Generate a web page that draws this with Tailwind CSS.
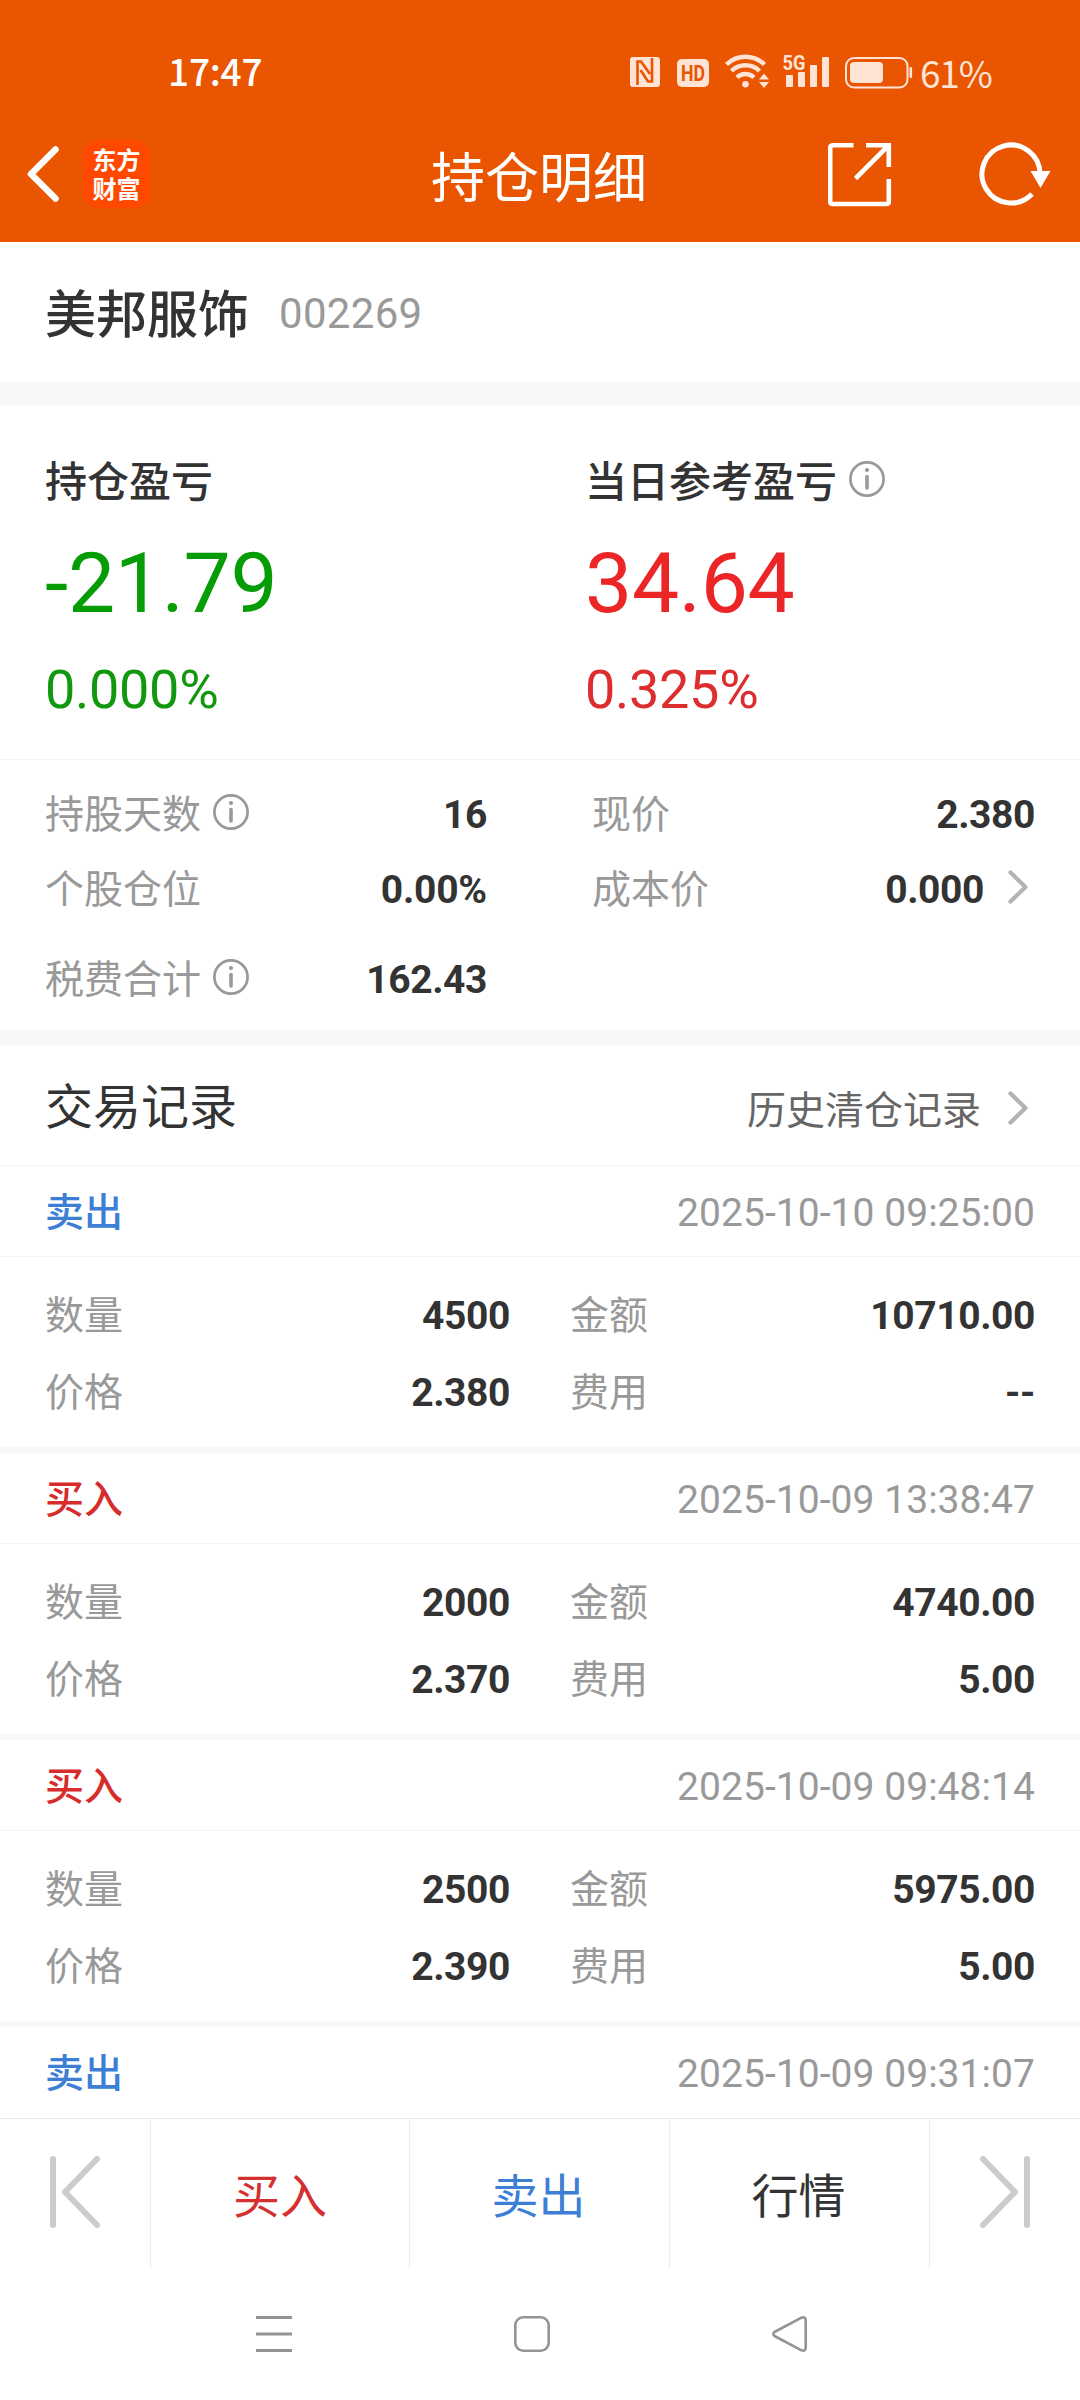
<!DOCTYPE html>
<html lang="zh-CN">
	<head>
		<meta charset="UTF-8" />
		<title>持仓明细</title>
		<script src="https://cdn.jsdelivr.net/npm/@tailwindcss/browser@4"></script>
	</head>
	<body class="bg-white">
		<!-- shared icons -->
		<svg class="hidden">
			<symbol id="info" viewBox="0 0 36 36">
				<circle cx="18" cy="18" r="16.6" fill="none" stroke="#999" stroke-width="2.7" />
				<circle cx="18" cy="9" r="2.1" fill="#999" />
				<path d="M18 15.5V27" stroke="#999" stroke-width="3.6" stroke-linecap="round" />
			</symbol>
			<symbol id="arrow" viewBox="0 0 20 34">
				<path d="M2.5 2.5L17.5 17L2.5 31.5" fill="none" stroke="#b3b3b3" stroke-width="4.2" stroke-linecap="round" stroke-linejoin="round" />
			</symbol>
			<symbol id="skip" viewBox="0 0 50 72">
				<path d="M3 3V69M47 3L15 36L47 69" fill="none" stroke="#ccc" stroke-width="6" stroke-linecap="round" stroke-linejoin="round" />
			</symbol>
		</svg>

		<div class="w-[1080px] h-[2400px] flex flex-col overflow-hidden leading-none text-[#333] font-[Roboto,'Noto_Sans_CJK_SC',sans-serif]">
			<header class="bg-[#e95500] text-white shrink-0">
				<div class="h-[106px] pt-10 pl-[168px] pr-[88px] flex items-center justify-between">
					<span class="text-[37px] pb-[5px] tracking-[-0.2px] font-medium font-['Noto_Sans_CJK_SC',sans-serif]">17:47</span>
					<div class="flex items-center text-[#ffe4d6]">
						<svg class="w-[291px] h-[58px]" viewBox="629 44 291 58" fill="currentColor">
							<!-- nfc -->
							<rect x="630" y="57" width="30" height="30" rx="3" />
							<path d="M637.5 85V61.5H641L650 74M640.5 70L648 81.5H652V58" fill="none" stroke="#e95500" stroke-width="2.6" />
							<!-- hd -->
							<rect x="677" y="59" width="32" height="28" rx="5" />
							<text x="681" y="81" font-size="22" font-weight="700" textLength="24" lengthAdjust="spacingAndGlyphs" fill="#e95500">HD</text>
							<!-- wifi -->
							<g fill="none" stroke="currentColor" stroke-width="4.4">
								<path d="M726.5 64.5A27 27 0 0 1 764.5 64.5" />
								<path d="M731.5 71A20 20 0 0 1 759.5 71" />
								<path d="M737 77.5A12 12 0 0 1 754 77.5" />
							</g>
							<circle cx="745.5" cy="84.3" r="3.3" />
							<path d="M759 79.5L764 73.5L769 79.5ZM759 82L764 88L769 82Z" />
							<!-- 5g signal -->
							<text x="782.5" y="70" font-size="21" font-weight="700" textLength="23" lengthAdjust="spacingAndGlyphs">5G</text>
							<rect x="786" y="75" width="7" height="12" rx="1" />
							<rect x="798" y="72" width="7" height="15" rx="1" />
							<rect x="810" y="65" width="7" height="22" rx="1" />
							<rect x="822" y="57" width="7" height="30" rx="1" />
							<!-- battery -->
							<rect x="846" y="58" width="61.5" height="29.5" rx="8" fill="none" stroke="currentColor" stroke-width="2" />
							<rect x="850" y="62" width="33" height="21" rx="4" />
							<rect x="909.5" y="67" width="2.6" height="11" rx="1.3" />
						</svg>
						<span class="w-[72px] text-[37px] tracking-[-1.2px] pb-px font-['Noto_Sans_CJK_SC',sans-serif]">61%</span>
					</div>
				</div>
				<div class="h-[136px] flex items-center pl-[26px] pr-[28px]">
					<div class="w-[294px] flex items-center">
						<svg class="w-[36px] h-[60px] mr-[21px]" viewBox="0 0 36 60">
							<path d="M29.5 5.5L5 30L29.5 54.5" fill="none" stroke="#fff" stroke-width="6.6" stroke-linecap="round" stroke-linejoin="round" />
						</svg>
						<div class="w-[67px] h-[68px] rounded-[16px] bg-[#ff4800] flex flex-col items-center justify-center gap-[5px] pt-[2px] text-[24px] font-bold">
							<span>东方</span>
							<span>财富</span>
						</div>
					</div>
					<h1 class="flex-1 text-center text-[54px] pt-[11px]">持仓明细</h1>
					<div class="w-[294px] flex items-center justify-end">
						<svg class="w-[64px] h-[64px] mt-0.5 mr-[87px]" viewBox="828 143 64 64" fill="none" stroke="#fff" stroke-width="4.6">
							<path d="M853.5 145.3H833Q830.2 145.3 830.2 148V201.5Q830.2 204 833 204H886Q888.8 204 888.8 201.5V179" />
							<path d="M866 145.3H888.8V167M888 146L855.5 178.5" />
						</svg>
						<svg class="w-[73px] h-[68px]" viewBox="979 140 73 68">
							<path d="M1040 174A29 29 0 1 0 1032 194" fill="none" stroke="#fff" stroke-width="5" />
							<path d="M1030.5 171H1050.5L1040.5 188Z" fill="#fff" />
						</svg>
					</div>
				</div>
			</header>

			<div class="h-[140px] shrink-0 flex items-center px-[45px] pt-1">
				<span class="text-[51px] pt-[3px] font-medium mr-[30px]">美邦服饰</span>
				<span class="text-[42px] tracking-[0.3px] text-[#999]">002269</span>
			</div>
			<div class="h-6 shrink-0 bg-[#f6f8fa]"></div>

			<!-- profit summary -->
			<div class="h-[354px] shrink-0 grid grid-cols-2 px-[45px] pt-[56px] border-b border-[#f3f4f6]">
				<div>
					<div class="text-[42px] font-medium">持仓盈亏</div>
					<div class="text-[84px] tracking-[-0.3px] mt-[38px] text-[#069c06]">-21.79</div>
					<div class="text-[54px] tracking-[-0.3px] mt-[37px] text-[#12980f]">0.000%</div>
				</div>
				<div class="pl-[45px]">
					<div class="text-[42px] font-medium flex">
						当日参考盈亏
						<svg class="w-[36px] h-[36px] ml-3 -mt-px"><use href="#info" /></svg>
					</div>
					<div class="text-[84px] tracking-[-0.3px] mt-[38px] text-[#ec2626]">34.64</div>
					<div class="text-[54px] tracking-[-0.3px] mt-[37px] text-[#dc2e2e]">0.325%</div>
				</div>
			</div>

			<!-- position details -->
			<div class="h-[270px] shrink-0 flex px-[45px] pt-[36px] text-[39px]">
				<div class="w-[442px] mr-[105px] flex flex-col">
					<div class="flex justify-between mb-[36px]">
						<span class="flex text-[#999]">持股天数<svg class="w-[36px] h-[36px] ml-3 -mt-0.5"><use href="#info" /></svg></span>
						<b class="tracking-[-0.4px]">16</b>
					</div>
					<div class="flex justify-between mb-[51px]">
						<span class="text-[#999]">个股仓位</span>
						<b class="tracking-[-0.2px]">0.00%</b>
					</div>
					<div class="flex justify-between">
						<span class="flex text-[#999]">税费合计<svg class="w-[36px] h-[36px] ml-3 -mt-0.5"><use href="#info" /></svg></span>
						<b class="tracking-[-0.4px]">162.43</b>
					</div>
				</div>
				<div class="flex-1">
					<div class="flex justify-between mb-[36px]">
						<span class="text-[#999]">现价</span>
						<b class="tracking-[-0.4px]">2.380</b>
					</div>
					<div class="flex">
						<span class="flex-1 text-[#999]">成本价</span>
						<b class="tracking-[-0.4px]">0.000</b>
						<svg class="w-5 h-[34px] ml-6 mr-[7px] -mt-px"><use href="#arrow" /></svg>
					</div>
				</div>
			</div>
			<div class="h-[15px] shrink-0 bg-[#f6f8fa]"></div>

			<div class="h-[121px] shrink-0 flex items-center px-[45px] pt-[6px] border-b border-[#f3f4f6]">
				<h2 class="flex-1 text-[48px]">交易记录</h2>
				<span class="text-[39px] text-[#666] pt-[6px]">历史清仓记录</span>
				<svg class="w-5 h-[34px] ml-[27px] mr-[7px] -mt-px"><use href="#arrow" /></svg>
			</div>

			<div id="records" class="flex-1 min-h-0 overflow-hidden text-[39px]"></div>

			<footer class="shrink-0">
				<div class="h-[150px] flex border-t border-[#e9e9e9] text-[47px]">
					<div class="w-[151px] border-r border-[#ececec] pl-[50px] pt-[37px]">
						<svg class="w-[50px] h-[72px]"><use href="#skip" /></svg>
					</div>
					<div class="w-[259px] flex items-center justify-center pt-1.5 border-r border-[#ececec] text-[#d3302f]">买入</div>
					<div class="w-[260px] flex items-center justify-center pt-1.5 pr-0.5 border-r border-[#ececec] text-[#3c7fd5]">卖出</div>
					<div class="w-[260px] flex items-center justify-center pt-1.5 pr-0.5 border-r border-[#ececec]">行情</div>
					<div class="w-[150px] pl-[50px] pt-[37px]">
						<svg class="w-[50px] h-[72px] -scale-x-100"><use href="#skip" /></svg>
					</div>
				</div>
				<!-- system navigation -->
				<div class="h-[132px] flex justify-center gap-[220px] pt-[47px] pr-4">
					<svg class="w-[38px] h-[38px]" viewBox="0 0 38 38"><path d="M1 2.5H37M1 19H37M1 35.5H37" stroke="#949494" stroke-width="3" /></svg>
					<svg class="w-[38px] h-[38px]" viewBox="0 0 38 38"><rect x="2.3" y="2.3" width="33.4" height="33.4" rx="8" fill="none" stroke="#949494" stroke-width="2.6" /></svg>
					<svg class="w-[38px] h-[38px]" viewBox="0 0 38 38"><path d="M30.5 2.7L3.5 17Q1 19 3.5 21L30.5 35.3Q34.5 36.5 34.7 33V5Q34.5 1.5 30.5 2.7Z" fill="none" stroke="#949494" stroke-width="2.6" stroke-linejoin="round" /></svg>
				</div>
			</footer>
		</div>

		<script>
			const records = [
				{ type: '卖出', time: '2025-10-10 09:25:00', qty: '4500', price: '2.380', amount: '10710.00', fee: '--' },
				{ type: '买入', time: '2025-10-09 13:38:47', qty: '2000', price: '2.370', amount: '4740.00', fee: '5.00' },
				{ type: '买入', time: '2025-10-09 09:48:14', qty: '2500', price: '2.390', amount: '5975.00', fee: '5.00' },
				{ type: '卖出', time: '2025-10-09 09:31:07' },
			];

			const cell = (label, value) => `
				<div class="flex justify-between"><span class="text-[#999]">${label}</span><b class="tracking-[-0.4px]">${value}</b></div>`;

			document.getElementById('records').innerHTML = records
				.map((r) => {
					const color = r.type === '买入' ? 'text-[#d62c2c]' : 'text-[#3c7fd5]';
					const head = `
					<div class="h-[90px] flex justify-between px-[45px] pt-[28px]">
						<span class="font-medium ${color}">${r.type}</span>
						<span class="text-[#999] tracking-[0.05px]">${r.time}</span>
					</div>`;
					if (!r.qty) return head;
					return `${head}
					<div class="h-[197px] grid grid-cols-[465px_465px] gap-x-[60px] gap-y-[38px] content-start px-[45px] pt-[40px] border-t border-t-[#f3f4f6] border-b-6 border-b-[#f6f8fa]">
						${cell('数量', r.qty)}${cell('金额', r.amount)}${cell('价格', r.price)}${cell('费用', r.fee)}
					</div>`;
				})
				.join('');
		</script>
	</body>
</html>
